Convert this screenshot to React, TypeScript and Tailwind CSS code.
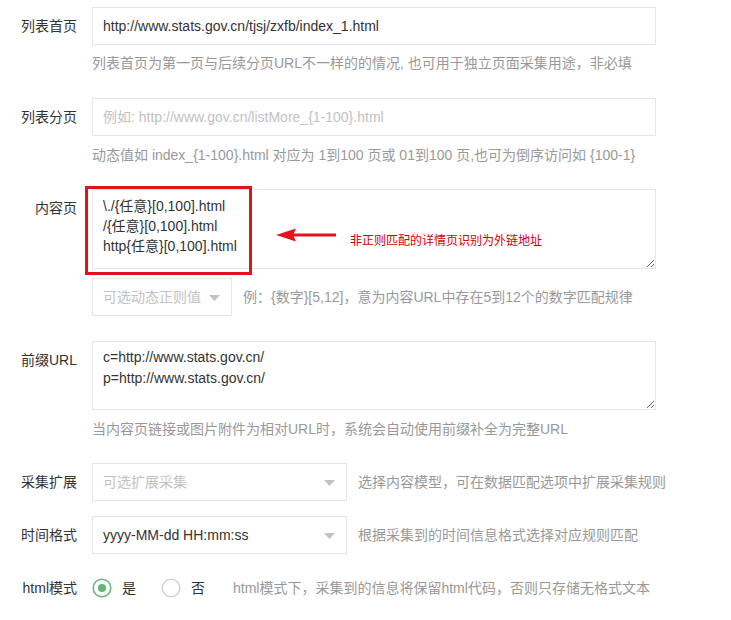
import type { ReactNode } from 'react';

const Label = ({ children }: { children: ReactNode }) => (
  <div className="w-[92px] shrink-0 pr-[15px] text-right text-[14px] leading-[38px] text-[#333]">{children}</div>
);

const Help = ({ children, className = '' }: { children: ReactNode; className?: string }) => (
  <div className={`text-[14px] leading-[20px] text-[#999] ${className}`}>{children}</div>
);

const Caret = () => (
  <svg width="11" height="6" viewBox="0 0 11 6" className="absolute right-[11px] top-[16px]">
    <path d="M0 0 H11 L5.5 6 Z" fill="#c2c2c2" />
  </svg>
);

const Select = ({ value, placeholder, className = '' }: { value?: string; placeholder?: string; className?: string }) => (
  <div className={`relative flex h-[38px] shrink-0 items-center border border-[#e6e6e6] bg-white pl-[10px] text-[14px] ${className}`}>
    {value ? <span className="text-[#333]">{value}</span> : <span className="text-[#c2c2c2]">{placeholder}</span>}
    <Caret />
  </div>
);

const Radio = ({ checked }: { checked?: boolean }) => (
  <svg width="20" height="20" viewBox="0 0 20 20">
    <circle cx="10" cy="10" r="8.8" fill="none" stroke={checked ? '#5fb878' : '#d2d2d2'} strokeWidth="1.5" />
    {checked && <circle cx="10" cy="10" r="4" fill="#5fb878" />}
  </svg>
);

export default function App() {
  return (
    <div className="min-h-[620px] w-[731px] bg-white pt-[7px] font-['Liberation_Sans','Noto_Sans_CJK_SC',sans-serif]">
      {/* 列表首页 */}
      <div className="flex">
        <Label>列表首页</Label>
        <div className="w-[564px]">
          <div className="flex h-[38px] items-center border border-[#e6e6e6] pl-[10px] text-[14px] text-[#333]">
            http://www.stats.gov.cn/tjsj/zxfb/index_1.html
          </div>
          <Help className="mt-2">列表首页为第一页与后续分页URL不一样的的情况, 也可用于独立页面采集用途，非必填</Help>
        </div>
      </div>

      {/* 列表分页 */}
      <div className="mt-[25px] flex">
        <Label>列表分页</Label>
        <div className="w-[564px]">
          <div className="flex h-[38px] items-center border border-[#e6e6e6] pl-[10px] text-[14px] text-[#c2c2c2]">
            例如: http://www.gov.cn/listMore_{'{1-100}'}.html
          </div>
          <Help className="mt-[9px]">动态值如 index_{'{1-100}'}.html 对应为 1到100 页或 01到100 页,也可为倒序访问如 {'{100-1}'}</Help>
        </div>
      </div>

      {/* 内容页 */}
      <div className="mt-[24px] flex">
        <Label>内容页</Label>
        <div className="w-[564px]">
          <div className="relative">
            <textarea
              readOnly
              className="block h-[80px] w-full border border-[#e6e6e6] pl-[10px] pt-[6px] text-[14px] leading-[20px] text-[#333] outline-none"
              defaultValue={'\\./{任意}[0,100].html\n/{任意}[0,100].html\nhttp{任意}[0,100].html'}
            />
            <div className="pointer-events-none absolute left-[-7px] top-[-3px] h-[89px] w-[167px] border-[3px] border-[#e2141b]" />
            <svg width="62" height="14" viewBox="0 0 62 14" className="absolute left-[184px] top-[39px]">
              <path d="M16 5.5 H60 V8.5 H16 Z" fill="#e2141b" />
              <path d="M0 7 L20 0.5 L17 7 L20 13.5 Z" fill="#e2141b" />
            </svg>
            <div className="absolute left-[258px] top-[43px] text-[12px] leading-[18px] text-[#d40000]">非正则匹配的详情页识别为外链地址</div>
          </div>
          <div className="mt-[9px] flex items-center">
            <Select placeholder="可选动态正则值" className="w-[140px]" />
            <Help className="pl-[11px]">例：{'{数字}'}[5,12]，意为内容URL中存在5到12个的数字匹配规律</Help>
          </div>
        </div>
      </div>

      {/* 前缀URL */}
      <div className="mt-[25px] flex">
        <Label>前缀URL</Label>
        <div className="w-[564px]">
          <textarea
            readOnly
            className="block h-[69px] w-full border border-[#e6e6e6] pl-[10px] pt-[5px] text-[14px] leading-[21px] text-[#333] outline-none"
            defaultValue={'c=http://www.stats.gov.cn/\np=http://www.stats.gov.cn/'}
          />
          <Help className="mt-[9px]">当内容页链接或图片附件为相对URL时，系统会自动使用前缀补全为完整URL</Help>
        </div>
      </div>

      {/* 采集扩展 */}
      <div className="mt-[24px] flex items-center">
        <Label>采集扩展</Label>
        <Select placeholder="可选扩展采集" className="w-[255px]" />
        <Help className="pl-[11px]">选择内容模型，可在数据匹配选项中扩展采集规则</Help>
      </div>

      {/* 时间格式 */}
      <div className="mt-[15px] flex items-center">
        <Label>时间格式</Label>
        <Select value="yyyy-MM-dd HH:mm:ss" className="w-[255px]" />
        <Help className="pl-[11px]">根据采集到的时间信息格式选择对应规则匹配</Help>
      </div>

      {/* html模式 */}
      <div className="mt-[15px] flex h-[38px] items-center">
        <Label>html模式</Label>
        <div className="flex items-center text-[14px] text-[#333]">
          <Radio checked />
          <span className="ml-[10px]">是</span>
          <span className="ml-[25px] flex">
            <Radio />
          </span>
          <span className="ml-[10px]">否</span>
          <Help className="ml-[28px]">html模式下，采集到的信息将保留html代码，否则只存储无格式文本</Help>
        </div>
      </div>
    </div>
  );
}
